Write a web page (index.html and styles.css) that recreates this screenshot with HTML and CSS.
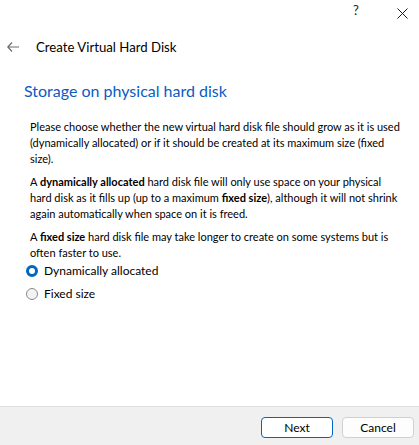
FILE: index.html
```html
<!DOCTYPE html>
<html>
<head>
<meta charset="utf-8">
<link rel="stylesheet" href="styles.css">
</head>
<body>
<div class="window">
  <div class="titlebar">
    <span class="help">?</span>
    <span class="close">
      <svg width="11" height="11" viewBox="0 0 11 11"><path d="M0.5 0.5 L10.5 10.5 M10.5 0.5 L0.5 10.5" stroke="#1a1a1a" stroke-width="1" fill="none"/></svg>
    </span>
  </div>
  <div class="header">
    <svg class="back" width="12" height="10" viewBox="0 0 12 10"><path d="M5 0.5 L0.8 5 L5 9.5 M0.8 5 H12" stroke="#6b6b6b" stroke-width="1.2" fill="none"/></svg>
    <span class="wizard-title">Create Virtual Hard Disk</span>
  </div>
  <div class="content">
    <h1 class="page-title">Storage on physical hard disk</h1>
    <div class="body">
      <p>Please choose whether the new virtual hard disk file should grow as it is used (dynamically allocated) or if it should be created at its maximum size (fixed size).</p>
      <p>A <b>dynamically allocated</b> hard disk file will only use space on your physical<br>hard disk as it fills up (up to a maximum <b>fixed size</b>), although it will not shrink again automatically when space on it is freed.</p>
      <p>A <b>fixed size</b> hard disk file may take longer to create on some systems but is often faster to use.</p>
      <div class="options">
        <label class="option"><span class="radio checked"></span>Dynamically allocated</label>
        <label class="option"><span class="radio"></span>Fixed size</label>
      </div>
    </div>
  </div>
  <div class="footer">
    <button class="btn primary">Next</button>
    <button class="btn">Cancel</button>
  </div>
</div>
</body>
</html>
```
FILE: styles.css
```css
* { box-sizing: border-box; }
html, body { margin: 0; padding: 0; }
body {
  font-family: Lato, "Noto Sans", sans-serif;
  font-size: 12px;
  color: #000;
  background: #fff;
}
.window {
  width: 419px;
  height: 445px;
  display: flex;
  flex-direction: column;
  background: #fff;
}
.titlebar {
  height: 30px;
  display: flex;
  justify-content: flex-end;
  align-items: flex-start;
  gap: 6px;
  padding-top: 2px;
}
.help {
  font-size: 13px;
  width: 46px;
  text-align: center;
  color: #1a1a1a;
}
.close {
  width: 34px;
  height: 16px;
  display: flex;
  justify-content: center;
  align-items: center;
  margin-top: 3px;
}
.header {
  display: flex;
  align-items: center;
  height: 34px;
  padding-left: 7px;
}
.back { margin-right: 17px; }
.wizard-title { font-size: 13.2px; color: #000; }
.content {
  flex: 1;
  padding: 0 11px 0 24px;
}
.page-title {
  margin: 17px 0 0 0;
  font-size: 16px;
  font-weight: normal;
  color: #0a5bc4;
  line-height: 20px;
}
.body {
  padding-left: 6px;
  margin-top: 18px;
  font-size: 11px;
}
.body p {
  margin: 0 0 7px 0;
  line-height: 16px;
}
.options {
  display: flex;
  flex-direction: column;
  gap: 10px;
  margin-top: -4px;
  font-size: 12px;
}
.option {
  display: flex;
  align-items: center;
  line-height: 13px;
}
.radio {
  width: 12px;
  height: 12px;
  border-radius: 50%;
  border: 1px solid #8c8c8c;
  background: #f3f3f3;
  margin: 0 6px 0 -4px;
}
.radio.checked {
  border: 3px solid #0067c0;
  background: #fff;
}
.footer {
  height: 39px;
  background: #f0f0f0;
  border-top: 1px solid #dfdfdf;
  display: flex;
  justify-content: flex-end;
  align-items: flex-start;
  gap: 9px;
  padding: 10px 5px 0 0;
}
.btn {
  width: 72px;
  height: 21px;
  font-family: inherit;
  font-size: 12px;
  color: #000;
  background: #fdfdfd;
  border: 1px solid #d0d0d0;
  border-radius: 4px;
  padding: 0;
}
.btn.primary {
  border-color: #0067c0;
  background: #fff;
}
```
